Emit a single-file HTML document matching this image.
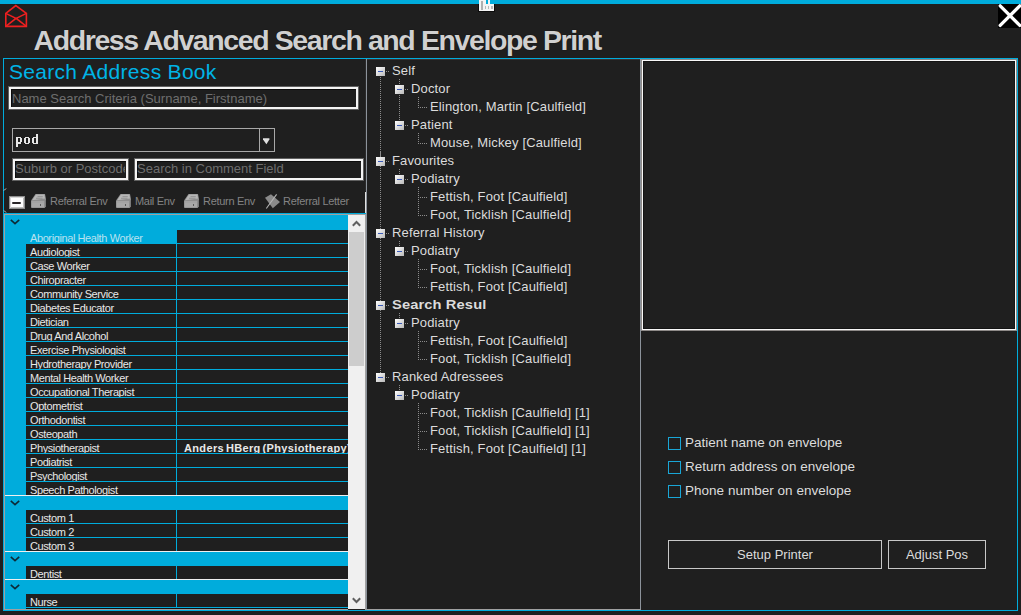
<!DOCTYPE html>
<html><head><meta charset="utf-8"><style>
html,body{margin:0;padding:0;width:1021px;height:615px;overflow:hidden;background:#1f1f1f;font-family:'Liberation Sans', sans-serif;}
</style></head><body>
<div style="position:absolute;left:0;top:0;width:1021px;height:4px;background:#00acdc"></div><svg style="position:absolute;left:478px;top:0" width="17" height="12" viewBox="0 0 17 12"><rect x="0" y="4" width="17" height="8" fill="#000" opacity="0.6"/><rect x="1" y="0" width="7" height="11" fill="#f4f4f4"/><rect x="1" y="4" width="15" height="7" fill="#f4f4f4"/><rect x="10" y="0" width="2" height="4" fill="#f4f4f4"/><rect x="3" y="1" width="2" height="9" fill="#b0b0b0"/><rect x="7" y="6" width="1" height="3" fill="#b8b8b8"/><rect x="10" y="6" width="1" height="3" fill="#b8b8b8"/><rect x="13" y="6" width="2" height="3" fill="#b8b8b8"/></svg><svg style="position:absolute;left:0;top:0" width="40" height="40" viewBox="0 0 40 40"><path d="M5.8 13.3 L15.8 5.6 L26.4 13.3 L26.4 26.4 L5.8 26.4 Z" fill="none" stroke="#ee2020" stroke-width="1.6" stroke-linejoin="miter"/><path d="M5.8 13.3 L16.1 18.3 L26.4 13.3 M5.8 26.4 L16.1 18.3 L26.4 26.4" fill="none" stroke="#ee2020" stroke-width="1.5"/></svg><div style="position:absolute;left:33.5px;top:23.5px;font:bold 28.5px 'Liberation Sans', sans-serif;color:#d0d0d0;white-space:nowrap;letter-spacing:-1.4px;text-shadow:0 0 1px rgba(0,0,0,0.9)">Address Advanced Search and Envelope Print</div><svg style="position:absolute;left:998px;top:4px" width="23" height="24" viewBox="0 0 23 24"><rect width="23" height="24" fill="#000"/><path d="M2.2 1.8 L21.8 21.4 M21.8 1.8 L2.2 21.4" stroke="#fff" stroke-width="3.3" stroke-linecap="round"/></svg><div style="position:absolute;left:3px;top:58px;width:1015px;height:553px;box-sizing:border-box;border:1px solid #00acdc"></div><svg style="position:absolute;left:3px;top:187px" width="4" height="28" viewBox="0 0 4 28"><path d="M1 3.5 L3 1.5 M1 23.5 L3 25.5" stroke="#e8e8e8" stroke-width="0.9"/></svg><div style="position:absolute;left:367px;top:59px;width:273px;height:1px;background:#3a3230"></div><div style="position:absolute;left:9px;top:60px;font:21px 'Liberation Sans', sans-serif;color:#00b4e6;white-space:nowrap;letter-spacing:0.3px">Search Address Book</div><div style="position:absolute;left:9px;top:87px;width:349px;height:22px;box-sizing:border-box;border:2px solid #f4f4f4;box-shadow:0 0 0 1px rgba(150,150,150,0.55);background:#1e1e1e;"><div style="position:absolute;left:0;top:0;right:0;bottom:0;border-top:1px solid #0c0c0c;border-left:1px solid #0c0c0c"></div><div style="position:absolute;left:1px;top:2px;font:13px 'Liberation Sans', sans-serif;color:#6e6e6e;white-space:nowrap;overflow:hidden;width:344px">Name Search Criteria (Surname, Firstname)</div></div><div style="position:absolute;left:12px;top:128px;width:263px;height:24px;box-sizing:border-box;border:1px solid #a8a8a8;background:#1f1f1f"><div style="position:absolute;left:246px;top:0;width:1px;height:22px;background:#a8a8a8"></div><svg style="position:absolute;left:-13px;top:-129px" width="40" height="150" shape-rendering="crispEdges"><g fill="#e6e6e6"><rect x="16" y="137" width="2" height="10"/><rect x="18" y="137" width="3" height="1"/><rect x="20" y="138" width="2" height="4"/><rect x="18" y="142" width="3" height="2"/><rect x="24" y="138" width="2" height="5"/><rect x="28" y="138" width="2" height="5"/><rect x="25" y="137" width="4" height="1"/><rect x="25" y="143" width="4" height="1"/><rect x="36" y="134" width="2" height="10"/><rect x="32" y="138" width="2" height="5"/><rect x="33" y="137" width="3" height="1"/><rect x="33" y="143" width="3" height="1"/></g></svg><svg style="position:absolute;left:250px;top:9px" width="8" height="8" viewBox="0 0 8 8"><path d="M0 0.2H6.4V1.6L3.4 6.2L0 1.6Z" fill="#e0e0e0"/></svg></div><div style="position:absolute;left:13px;top:159px;width:115px;height:21px;box-sizing:border-box;border:2px solid #f4f4f4;box-shadow:0 0 0 1px rgba(150,150,150,0.55);background:#1e1e1e;"><div style="position:absolute;left:0;top:0;right:0;bottom:0;border-top:1px solid #0c0c0c;border-left:1px solid #0c0c0c"></div><div style="position:absolute;left:0px;top:0px;font:13px 'Liberation Sans', sans-serif;color:#6e6e6e;white-space:nowrap;overflow:hidden;width:110px">Suburb or Postcode</div></div><div style="position:absolute;left:135px;top:159px;width:228px;height:21px;box-sizing:border-box;border:2px solid #f4f4f4;box-shadow:0 0 0 1px rgba(150,150,150,0.55);background:#1e1e1e;"><div style="position:absolute;left:0;top:0;right:0;bottom:0;border-top:1px solid #0c0c0c;border-left:1px solid #0c0c0c"></div><div style="position:absolute;left:0px;top:0px;font:13px 'Liberation Sans', sans-serif;color:#6e6e6e;white-space:nowrap;overflow:hidden;width:223px">Search in Comment Field</div></div><div style="position:absolute;left:4px;top:213px;width:362px;height:1px;background:#00acdc"></div><div style="position:absolute;left:365px;top:192px;width:1px;height:21px;background:#e0e0e0"></div><div style="position:absolute;left:365px;top:59px;width:1px;height:132px;background:#2a2a2a"></div><div style="position:absolute;left:9px;top:196px;width:16px;height:13px;box-sizing:border-box;background:#fdfdfd;border:1px solid #8e8e8e;box-shadow:inset 1px 1px 0 #d8d8d8, inset -1px -1px 0 #bdbdbd"><div style="position:absolute;left:2px;top:5px;width:9px;height:2px;background:#2a2628;border-radius:1px"></div></div><svg style="position:absolute;left:30px;top:193px" width="17" height="16" viewBox="0 0 17 16"><path d="M5.5 1 H15 L16 6 L16 13.5 L14.5 15 H1.5 L1 14 V7.5 Z" fill="#8e8e8e"/><path d="M6 1.6 H14.4 L15 5.6 L2.2 7.2 Z" fill="#b6b6b6"/><path d="M1.6 8 H14.6 V14.4 H1.6 Z" fill="#a9a9a9"/><path d="M14.6 8 L15.8 6.5 V13.2 L14.6 14.4 Z" fill="#777"/><path d="M7.5 3.6 H12.8 M6 5.3 H12.5" stroke="#8c8c8c" stroke-width="0.8"/><path d="M1.6 9 H14.6" stroke="#9a9a9a" stroke-width="0.6"/><rect x="10" y="11" width="1" height="2" fill="#5a5a5a"/></svg><div style="position:absolute;left:50px;top:195px;font:11px 'Liberation Sans', sans-serif;color:#848484;white-space:nowrap;letter-spacing:-0.3px">Referral Env</div><svg style="position:absolute;left:115px;top:193px" width="17" height="16" viewBox="0 0 17 16"><path d="M5.5 1 H15 L16 6 L16 13.5 L14.5 15 H1.5 L1 14 V7.5 Z" fill="#8e8e8e"/><path d="M6 1.6 H14.4 L15 5.6 L2.2 7.2 Z" fill="#b6b6b6"/><path d="M1.6 8 H14.6 V14.4 H1.6 Z" fill="#a9a9a9"/><path d="M14.6 8 L15.8 6.5 V13.2 L14.6 14.4 Z" fill="#777"/><path d="M7.5 3.6 H12.8 M6 5.3 H12.5" stroke="#8c8c8c" stroke-width="0.8"/><path d="M1.6 9 H14.6" stroke="#9a9a9a" stroke-width="0.6"/><rect x="10" y="11" width="1" height="2" fill="#5a5a5a"/></svg><div style="position:absolute;left:135px;top:195px;font:11px 'Liberation Sans', sans-serif;color:#848484;white-space:nowrap;letter-spacing:-0.3px">Mail Env</div><svg style="position:absolute;left:183px;top:193px" width="17" height="16" viewBox="0 0 17 16"><path d="M5.5 1 H15 L16 6 L16 13.5 L14.5 15 H1.5 L1 14 V7.5 Z" fill="#8e8e8e"/><path d="M6 1.6 H14.4 L15 5.6 L2.2 7.2 Z" fill="#b6b6b6"/><path d="M1.6 8 H14.6 V14.4 H1.6 Z" fill="#a9a9a9"/><path d="M14.6 8 L15.8 6.5 V13.2 L14.6 14.4 Z" fill="#777"/><path d="M7.5 3.6 H12.8 M6 5.3 H12.5" stroke="#8c8c8c" stroke-width="0.8"/><path d="M1.6 9 H14.6" stroke="#9a9a9a" stroke-width="0.6"/><rect x="10" y="11" width="1" height="2" fill="#5a5a5a"/></svg><div style="position:absolute;left:203px;top:195px;font:11px 'Liberation Sans', sans-serif;color:#848484;white-space:nowrap;letter-spacing:-0.3px">Return Env</div><svg style="position:absolute;left:261px;top:190px" width="22" height="22" viewBox="0 0 22 22"><path d="M4 7.8 L10 4.2 L19 12 L11.8 18.2 Z" fill="#8a8a8a"/><path d="M5.3 18.5 L15.6 4.4" stroke="#b4b4b4" stroke-width="1.1"/></svg><div style="position:absolute;left:283px;top:195px;font:11px 'Liberation Sans', sans-serif;color:#848484;white-space:nowrap;letter-spacing:-0.3px">Referral Letter</div><div style="position:absolute;left:4px;top:214px;width:344px;height:396px;box-sizing:border-box;border-left:1px solid #a0a0a0;border-top:1px solid #a0a0a0;border-bottom:1px solid #a0a0a0;background:#00acdc;overflow:hidden"><svg style="position:absolute;left:5px;top:4px" width="10" height="6" viewBox="0 0 10 6"><path d="M0.8 0.8 L5 4.6 L9.2 0.8" fill="none" stroke="#0d2a36" stroke-width="1.6"/></svg><div style="position:absolute;left:21px;top:15px;width:150px;height:13px;font:11px 'Liberation Sans', sans-serif;color:#b8e2f0;padding-left:4px;box-sizing:border-box;line-height:16px;white-space:nowrap;overflow:hidden;letter-spacing:-0.4px">Aboriginal Health Worker</div><div style="position:absolute;left:172px;top:15px;width:200px;height:13px;background:#1f1f1f;font:bold 11px 'Liberation Sans', sans-serif;color:#e8e8e8;padding-left:7px;box-sizing:border-box;line-height:16px;white-space:nowrap;overflow:hidden"><span style="display:inline-block;letter-spacing:0.35px;word-spacing:-1.5px"></span></div><div style="position:absolute;left:21px;top:29px;width:150px;height:13px;background:#1f1f1f;font:11px 'Liberation Sans', sans-serif;color:#e8e8e8;padding-left:4px;box-sizing:border-box;line-height:16px;white-space:nowrap;overflow:hidden;letter-spacing:-0.4px">Audiologist</div><div style="position:absolute;left:172px;top:29px;width:200px;height:13px;background:#1f1f1f;font:bold 11px 'Liberation Sans', sans-serif;color:#e8e8e8;padding-left:7px;box-sizing:border-box;line-height:16px;white-space:nowrap;overflow:hidden"><span style="display:inline-block;letter-spacing:0.35px;word-spacing:-1.5px"></span></div><div style="position:absolute;left:21px;top:43px;width:150px;height:13px;background:#1f1f1f;font:11px 'Liberation Sans', sans-serif;color:#e8e8e8;padding-left:4px;box-sizing:border-box;line-height:16px;white-space:nowrap;overflow:hidden;letter-spacing:-0.4px">Case Worker</div><div style="position:absolute;left:172px;top:43px;width:200px;height:13px;background:#1f1f1f;font:bold 11px 'Liberation Sans', sans-serif;color:#e8e8e8;padding-left:7px;box-sizing:border-box;line-height:16px;white-space:nowrap;overflow:hidden"><span style="display:inline-block;letter-spacing:0.35px;word-spacing:-1.5px"></span></div><div style="position:absolute;left:21px;top:57px;width:150px;height:13px;background:#1f1f1f;font:11px 'Liberation Sans', sans-serif;color:#e8e8e8;padding-left:4px;box-sizing:border-box;line-height:16px;white-space:nowrap;overflow:hidden;letter-spacing:-0.4px">Chiropracter</div><div style="position:absolute;left:172px;top:57px;width:200px;height:13px;background:#1f1f1f;font:bold 11px 'Liberation Sans', sans-serif;color:#e8e8e8;padding-left:7px;box-sizing:border-box;line-height:16px;white-space:nowrap;overflow:hidden"><span style="display:inline-block;letter-spacing:0.35px;word-spacing:-1.5px"></span></div><div style="position:absolute;left:21px;top:71px;width:150px;height:13px;background:#1f1f1f;font:11px 'Liberation Sans', sans-serif;color:#e8e8e8;padding-left:4px;box-sizing:border-box;line-height:16px;white-space:nowrap;overflow:hidden;letter-spacing:-0.4px">Community Service</div><div style="position:absolute;left:172px;top:71px;width:200px;height:13px;background:#1f1f1f;font:bold 11px 'Liberation Sans', sans-serif;color:#e8e8e8;padding-left:7px;box-sizing:border-box;line-height:16px;white-space:nowrap;overflow:hidden"><span style="display:inline-block;letter-spacing:0.35px;word-spacing:-1.5px"></span></div><div style="position:absolute;left:21px;top:85px;width:150px;height:13px;background:#1f1f1f;font:11px 'Liberation Sans', sans-serif;color:#e8e8e8;padding-left:4px;box-sizing:border-box;line-height:16px;white-space:nowrap;overflow:hidden;letter-spacing:-0.4px">Diabetes Educator</div><div style="position:absolute;left:172px;top:85px;width:200px;height:13px;background:#1f1f1f;font:bold 11px 'Liberation Sans', sans-serif;color:#e8e8e8;padding-left:7px;box-sizing:border-box;line-height:16px;white-space:nowrap;overflow:hidden"><span style="display:inline-block;letter-spacing:0.35px;word-spacing:-1.5px"></span></div><div style="position:absolute;left:21px;top:99px;width:150px;height:13px;background:#1f1f1f;font:11px 'Liberation Sans', sans-serif;color:#e8e8e8;padding-left:4px;box-sizing:border-box;line-height:16px;white-space:nowrap;overflow:hidden;letter-spacing:-0.4px">Dietician</div><div style="position:absolute;left:172px;top:99px;width:200px;height:13px;background:#1f1f1f;font:bold 11px 'Liberation Sans', sans-serif;color:#e8e8e8;padding-left:7px;box-sizing:border-box;line-height:16px;white-space:nowrap;overflow:hidden"><span style="display:inline-block;letter-spacing:0.35px;word-spacing:-1.5px"></span></div><div style="position:absolute;left:21px;top:113px;width:150px;height:13px;background:#1f1f1f;font:11px 'Liberation Sans', sans-serif;color:#e8e8e8;padding-left:4px;box-sizing:border-box;line-height:16px;white-space:nowrap;overflow:hidden;letter-spacing:-0.4px">Drug And Alcohol</div><div style="position:absolute;left:172px;top:113px;width:200px;height:13px;background:#1f1f1f;font:bold 11px 'Liberation Sans', sans-serif;color:#e8e8e8;padding-left:7px;box-sizing:border-box;line-height:16px;white-space:nowrap;overflow:hidden"><span style="display:inline-block;letter-spacing:0.35px;word-spacing:-1.5px"></span></div><div style="position:absolute;left:21px;top:127px;width:150px;height:13px;background:#1f1f1f;font:11px 'Liberation Sans', sans-serif;color:#e8e8e8;padding-left:4px;box-sizing:border-box;line-height:16px;white-space:nowrap;overflow:hidden;letter-spacing:-0.4px">Exercise Physiologist</div><div style="position:absolute;left:172px;top:127px;width:200px;height:13px;background:#1f1f1f;font:bold 11px 'Liberation Sans', sans-serif;color:#e8e8e8;padding-left:7px;box-sizing:border-box;line-height:16px;white-space:nowrap;overflow:hidden"><span style="display:inline-block;letter-spacing:0.35px;word-spacing:-1.5px"></span></div><div style="position:absolute;left:21px;top:141px;width:150px;height:13px;background:#1f1f1f;font:11px 'Liberation Sans', sans-serif;color:#e8e8e8;padding-left:4px;box-sizing:border-box;line-height:16px;white-space:nowrap;overflow:hidden;letter-spacing:-0.4px">Hydrotherapy Provider</div><div style="position:absolute;left:172px;top:141px;width:200px;height:13px;background:#1f1f1f;font:bold 11px 'Liberation Sans', sans-serif;color:#e8e8e8;padding-left:7px;box-sizing:border-box;line-height:16px;white-space:nowrap;overflow:hidden"><span style="display:inline-block;letter-spacing:0.35px;word-spacing:-1.5px"></span></div><div style="position:absolute;left:21px;top:155px;width:150px;height:13px;background:#1f1f1f;font:11px 'Liberation Sans', sans-serif;color:#e8e8e8;padding-left:4px;box-sizing:border-box;line-height:16px;white-space:nowrap;overflow:hidden;letter-spacing:-0.4px">Mental Health Worker</div><div style="position:absolute;left:172px;top:155px;width:200px;height:13px;background:#1f1f1f;font:bold 11px 'Liberation Sans', sans-serif;color:#e8e8e8;padding-left:7px;box-sizing:border-box;line-height:16px;white-space:nowrap;overflow:hidden"><span style="display:inline-block;letter-spacing:0.35px;word-spacing:-1.5px"></span></div><div style="position:absolute;left:21px;top:169px;width:150px;height:13px;background:#1f1f1f;font:11px 'Liberation Sans', sans-serif;color:#e8e8e8;padding-left:4px;box-sizing:border-box;line-height:16px;white-space:nowrap;overflow:hidden;letter-spacing:-0.4px">Occupational Therapist</div><div style="position:absolute;left:172px;top:169px;width:200px;height:13px;background:#1f1f1f;font:bold 11px 'Liberation Sans', sans-serif;color:#e8e8e8;padding-left:7px;box-sizing:border-box;line-height:16px;white-space:nowrap;overflow:hidden"><span style="display:inline-block;letter-spacing:0.35px;word-spacing:-1.5px"></span></div><div style="position:absolute;left:21px;top:183px;width:150px;height:13px;background:#1f1f1f;font:11px 'Liberation Sans', sans-serif;color:#e8e8e8;padding-left:4px;box-sizing:border-box;line-height:16px;white-space:nowrap;overflow:hidden;letter-spacing:-0.4px">Optometrist</div><div style="position:absolute;left:172px;top:183px;width:200px;height:13px;background:#1f1f1f;font:bold 11px 'Liberation Sans', sans-serif;color:#e8e8e8;padding-left:7px;box-sizing:border-box;line-height:16px;white-space:nowrap;overflow:hidden"><span style="display:inline-block;letter-spacing:0.35px;word-spacing:-1.5px"></span></div><div style="position:absolute;left:21px;top:197px;width:150px;height:13px;background:#1f1f1f;font:11px 'Liberation Sans', sans-serif;color:#e8e8e8;padding-left:4px;box-sizing:border-box;line-height:16px;white-space:nowrap;overflow:hidden;letter-spacing:-0.4px">Orthodontist</div><div style="position:absolute;left:172px;top:197px;width:200px;height:13px;background:#1f1f1f;font:bold 11px 'Liberation Sans', sans-serif;color:#e8e8e8;padding-left:7px;box-sizing:border-box;line-height:16px;white-space:nowrap;overflow:hidden"><span style="display:inline-block;letter-spacing:0.35px;word-spacing:-1.5px"></span></div><div style="position:absolute;left:21px;top:211px;width:150px;height:13px;background:#1f1f1f;font:11px 'Liberation Sans', sans-serif;color:#e8e8e8;padding-left:4px;box-sizing:border-box;line-height:16px;white-space:nowrap;overflow:hidden;letter-spacing:-0.4px">Osteopath</div><div style="position:absolute;left:172px;top:211px;width:200px;height:13px;background:#1f1f1f;font:bold 11px 'Liberation Sans', sans-serif;color:#e8e8e8;padding-left:7px;box-sizing:border-box;line-height:16px;white-space:nowrap;overflow:hidden"><span style="display:inline-block;letter-spacing:0.35px;word-spacing:-1.5px"></span></div><div style="position:absolute;left:21px;top:225px;width:150px;height:13px;background:#1f1f1f;font:11px 'Liberation Sans', sans-serif;color:#e8e8e8;padding-left:4px;box-sizing:border-box;line-height:16px;white-space:nowrap;overflow:hidden;letter-spacing:-0.4px">Physiotherapist</div><div style="position:absolute;left:172px;top:225px;width:200px;height:13px;background:#1f1f1f;font:bold 11px 'Liberation Sans', sans-serif;color:#e8e8e8;padding-left:7px;box-sizing:border-box;line-height:16px;white-space:nowrap;overflow:hidden"><span style="display:inline-block;letter-spacing:0.35px;word-spacing:-1.5px">Anders HBerg (Physiotherapy)</span></div><div style="position:absolute;left:21px;top:239px;width:150px;height:13px;background:#1f1f1f;font:11px 'Liberation Sans', sans-serif;color:#e8e8e8;padding-left:4px;box-sizing:border-box;line-height:16px;white-space:nowrap;overflow:hidden;letter-spacing:-0.4px">Podiatrist</div><div style="position:absolute;left:172px;top:239px;width:200px;height:13px;background:#1f1f1f;font:bold 11px 'Liberation Sans', sans-serif;color:#e8e8e8;padding-left:7px;box-sizing:border-box;line-height:16px;white-space:nowrap;overflow:hidden"><span style="display:inline-block;letter-spacing:0.35px;word-spacing:-1.5px"></span></div><div style="position:absolute;left:21px;top:253px;width:150px;height:13px;background:#1f1f1f;font:11px 'Liberation Sans', sans-serif;color:#e8e8e8;padding-left:4px;box-sizing:border-box;line-height:16px;white-space:nowrap;overflow:hidden;letter-spacing:-0.4px">Psychologist</div><div style="position:absolute;left:172px;top:253px;width:200px;height:13px;background:#1f1f1f;font:bold 11px 'Liberation Sans', sans-serif;color:#e8e8e8;padding-left:7px;box-sizing:border-box;line-height:16px;white-space:nowrap;overflow:hidden"><span style="display:inline-block;letter-spacing:0.35px;word-spacing:-1.5px"></span></div><div style="position:absolute;left:21px;top:267px;width:150px;height:13px;background:#1f1f1f;font:11px 'Liberation Sans', sans-serif;color:#e8e8e8;padding-left:4px;box-sizing:border-box;line-height:16px;white-space:nowrap;overflow:hidden;letter-spacing:-0.4px">Speech Pathologist</div><div style="position:absolute;left:172px;top:267px;width:200px;height:13px;background:#1f1f1f;font:bold 11px 'Liberation Sans', sans-serif;color:#e8e8e8;padding-left:7px;box-sizing:border-box;line-height:16px;white-space:nowrap;overflow:hidden"><span style="display:inline-block;letter-spacing:0.35px;word-spacing:-1.5px"></span></div><div style="position:absolute;left:0;top:280px;width:400px;height:1px;background:#f0f0f0"></div><svg style="position:absolute;left:5px;top:285px" width="10" height="6" viewBox="0 0 10 6"><path d="M0.8 0.8 L5 4.6 L9.2 0.8" fill="none" stroke="#0d2a36" stroke-width="1.6"/></svg><div style="position:absolute;left:21px;top:295px;width:150px;height:13px;background:#1f1f1f;font:11px 'Liberation Sans', sans-serif;color:#e8e8e8;padding-left:4px;box-sizing:border-box;line-height:16px;white-space:nowrap;overflow:hidden;letter-spacing:-0.4px">Custom 1</div><div style="position:absolute;left:172px;top:295px;width:200px;height:13px;background:#1f1f1f;font:bold 11px 'Liberation Sans', sans-serif;color:#e8e8e8;padding-left:7px;box-sizing:border-box;line-height:16px;white-space:nowrap;overflow:hidden"><span style="display:inline-block;letter-spacing:0.35px;word-spacing:-1.5px"></span></div><div style="position:absolute;left:21px;top:309px;width:150px;height:13px;background:#1f1f1f;font:11px 'Liberation Sans', sans-serif;color:#e8e8e8;padding-left:4px;box-sizing:border-box;line-height:16px;white-space:nowrap;overflow:hidden;letter-spacing:-0.4px">Custom 2</div><div style="position:absolute;left:172px;top:309px;width:200px;height:13px;background:#1f1f1f;font:bold 11px 'Liberation Sans', sans-serif;color:#e8e8e8;padding-left:7px;box-sizing:border-box;line-height:16px;white-space:nowrap;overflow:hidden"><span style="display:inline-block;letter-spacing:0.35px;word-spacing:-1.5px"></span></div><div style="position:absolute;left:21px;top:323px;width:150px;height:13px;background:#1f1f1f;font:11px 'Liberation Sans', sans-serif;color:#e8e8e8;padding-left:4px;box-sizing:border-box;line-height:16px;white-space:nowrap;overflow:hidden;letter-spacing:-0.4px">Custom 3</div><div style="position:absolute;left:172px;top:323px;width:200px;height:13px;background:#1f1f1f;font:bold 11px 'Liberation Sans', sans-serif;color:#e8e8e8;padding-left:7px;box-sizing:border-box;line-height:16px;white-space:nowrap;overflow:hidden"><span style="display:inline-block;letter-spacing:0.35px;word-spacing:-1.5px"></span></div><div style="position:absolute;left:0;top:336px;width:400px;height:1px;background:#f0f0f0"></div><svg style="position:absolute;left:5px;top:341px" width="10" height="6" viewBox="0 0 10 6"><path d="M0.8 0.8 L5 4.6 L9.2 0.8" fill="none" stroke="#0d2a36" stroke-width="1.6"/></svg><div style="position:absolute;left:21px;top:351px;width:150px;height:13px;background:#1f1f1f;font:11px 'Liberation Sans', sans-serif;color:#e8e8e8;padding-left:4px;box-sizing:border-box;line-height:16px;white-space:nowrap;overflow:hidden;letter-spacing:-0.4px">Dentist</div><div style="position:absolute;left:172px;top:351px;width:200px;height:13px;background:#1f1f1f;font:bold 11px 'Liberation Sans', sans-serif;color:#e8e8e8;padding-left:7px;box-sizing:border-box;line-height:16px;white-space:nowrap;overflow:hidden"><span style="display:inline-block;letter-spacing:0.35px;word-spacing:-1.5px"></span></div><div style="position:absolute;left:0;top:364px;width:400px;height:1px;background:#f0f0f0"></div><svg style="position:absolute;left:5px;top:369px" width="10" height="6" viewBox="0 0 10 6"><path d="M0.8 0.8 L5 4.6 L9.2 0.8" fill="none" stroke="#0d2a36" stroke-width="1.6"/></svg><div style="position:absolute;left:21px;top:379px;width:150px;height:13px;background:#1f1f1f;font:11px 'Liberation Sans', sans-serif;color:#e8e8e8;padding-left:4px;box-sizing:border-box;line-height:16px;white-space:nowrap;overflow:hidden;letter-spacing:-0.4px">Nurse</div><div style="position:absolute;left:172px;top:379px;width:200px;height:13px;background:#1f1f1f;font:bold 11px 'Liberation Sans', sans-serif;color:#e8e8e8;padding-left:7px;box-sizing:border-box;line-height:16px;white-space:nowrap;overflow:hidden"><span style="display:inline-block;letter-spacing:0.35px;word-spacing:-1.5px"></span></div><div style="position:absolute;left:21px;top:393px;width:400px;height:1px;background:#101010"></div></div><div style="position:absolute;left:348px;top:215px;width:17px;height:394px;background:#f0f0f0"><svg style="position:absolute;left:4px;top:5px" width="9" height="7" viewBox="0 0 9 7"><path d="M0.8 5.8 L4.5 2 L8.2 5.8" fill="none" stroke="#606060" stroke-width="2"/></svg><div style="position:absolute;left:1px;top:17px;width:15px;height:134px;background:#cdcdcd"></div><svg style="position:absolute;left:4px;top:382px" width="9" height="7" viewBox="0 0 9 7"><path d="M0.8 1.2 L4.5 5 L8.2 1.2" fill="none" stroke="#606060" stroke-width="2"/></svg></div><div style="position:absolute;left:365px;top:215px;width:1px;height:395px;background:#a0a0a0"></div><div style="position:absolute;left:4px;top:214px;width:362px;height:1px;background:#a0a0a0"></div><div style="position:absolute;left:366px;top:59px;width:275px;height:551px;box-sizing:border-box;border-left:1px solid #8c939b;border-right:1px solid #8c939b;border-bottom:1px solid #a0a0a0;"></div><div style="position:absolute;left:392px;top:62px;font:13px 'Liberation Sans', sans-serif;color:#dcdcdc;white-space:nowrap;line-height:18px;letter-spacing:0.15px;">Self</div><div style="position:absolute;left:411px;top:80px;font:13px 'Liberation Sans', sans-serif;color:#dcdcdc;white-space:nowrap;line-height:18px;letter-spacing:0.15px;">Doctor</div><div style="position:absolute;left:430px;top:98px;font:13px 'Liberation Sans', sans-serif;color:#dcdcdc;white-space:nowrap;line-height:18px;letter-spacing:0.15px;">Elington, Martin [Caulfield]</div><div style="position:absolute;left:411px;top:116px;font:13px 'Liberation Sans', sans-serif;color:#dcdcdc;white-space:nowrap;line-height:18px;letter-spacing:0.15px;">Patient</div><div style="position:absolute;left:430px;top:134px;font:13px 'Liberation Sans', sans-serif;color:#dcdcdc;white-space:nowrap;line-height:18px;letter-spacing:0.15px;">Mouse, Mickey [Caulfield]</div><div style="position:absolute;left:392px;top:152px;font:13px 'Liberation Sans', sans-serif;color:#dcdcdc;white-space:nowrap;line-height:18px;letter-spacing:0.15px;">Favourites</div><div style="position:absolute;left:411px;top:170px;font:13px 'Liberation Sans', sans-serif;color:#dcdcdc;white-space:nowrap;line-height:18px;letter-spacing:0.15px;">Podiatry</div><div style="position:absolute;left:430px;top:188px;font:13px 'Liberation Sans', sans-serif;color:#dcdcdc;white-space:nowrap;line-height:18px;letter-spacing:0.15px;">Fettish, Foot [Caulfield]</div><div style="position:absolute;left:430px;top:206px;font:13px 'Liberation Sans', sans-serif;color:#dcdcdc;white-space:nowrap;line-height:18px;letter-spacing:0.15px;">Foot, Ticklish [Caulfield]</div><div style="position:absolute;left:392px;top:224px;font:13px 'Liberation Sans', sans-serif;color:#dcdcdc;white-space:nowrap;line-height:18px;letter-spacing:0.15px;">Referral History</div><div style="position:absolute;left:411px;top:242px;font:13px 'Liberation Sans', sans-serif;color:#dcdcdc;white-space:nowrap;line-height:18px;letter-spacing:0.15px;">Podiatry</div><div style="position:absolute;left:430px;top:260px;font:13px 'Liberation Sans', sans-serif;color:#dcdcdc;white-space:nowrap;line-height:18px;letter-spacing:0.15px;">Foot, Ticklish [Caulfield]</div><div style="position:absolute;left:430px;top:278px;font:13px 'Liberation Sans', sans-serif;color:#dcdcdc;white-space:nowrap;line-height:18px;letter-spacing:0.15px;">Fettish, Foot [Caulfield]</div><div style="position:absolute;left:392px;top:296px;font:bold 13px 'Liberation Sans', sans-serif;color:#dcdcdc;white-space:nowrap;line-height:18px;letter-spacing:0.15px;letter-spacing:0.1px;transform:scaleX(1.13);transform-origin:0 0;">Search Resul</div><div style="position:absolute;left:411px;top:314px;font:13px 'Liberation Sans', sans-serif;color:#dcdcdc;white-space:nowrap;line-height:18px;letter-spacing:0.15px;">Podiatry</div><div style="position:absolute;left:430px;top:332px;font:13px 'Liberation Sans', sans-serif;color:#dcdcdc;white-space:nowrap;line-height:18px;letter-spacing:0.15px;">Fettish, Foot [Caulfield]</div><div style="position:absolute;left:430px;top:350px;font:13px 'Liberation Sans', sans-serif;color:#dcdcdc;white-space:nowrap;line-height:18px;letter-spacing:0.15px;">Foot, Ticklish [Caulfield]</div><div style="position:absolute;left:392px;top:368px;font:13px 'Liberation Sans', sans-serif;color:#dcdcdc;white-space:nowrap;line-height:18px;letter-spacing:0.15px;">Ranked Adressees</div><div style="position:absolute;left:411px;top:386px;font:13px 'Liberation Sans', sans-serif;color:#dcdcdc;white-space:nowrap;line-height:18px;letter-spacing:0.15px;">Podiatry</div><div style="position:absolute;left:430px;top:404px;font:13px 'Liberation Sans', sans-serif;color:#dcdcdc;white-space:nowrap;line-height:18px;letter-spacing:0.15px;">Foot, Ticklish [Caulfield] [1]</div><div style="position:absolute;left:430px;top:422px;font:13px 'Liberation Sans', sans-serif;color:#dcdcdc;white-space:nowrap;line-height:18px;letter-spacing:0.15px;">Foot, Ticklish [Caulfield] [1]</div><div style="position:absolute;left:430px;top:440px;font:13px 'Liberation Sans', sans-serif;color:#dcdcdc;white-space:nowrap;line-height:18px;letter-spacing:0.15px;">Fettish, Foot [Caulfield] [1]</div><svg style="position:absolute;left:0;top:0" width="1021" height="615"><path d="M380 71h1v1h-1zM380 73h1v1h-1zM380 75h1v1h-1zM380 77h1v1h-1zM380 79h1v1h-1zM380 81h1v1h-1zM380 83h1v1h-1zM380 85h1v1h-1zM380 87h1v1h-1zM380 89h1v1h-1zM380 91h1v1h-1zM380 93h1v1h-1zM380 95h1v1h-1zM380 97h1v1h-1zM380 99h1v1h-1zM380 101h1v1h-1zM380 103h1v1h-1zM380 105h1v1h-1zM380 107h1v1h-1zM380 109h1v1h-1zM380 111h1v1h-1zM380 113h1v1h-1zM380 115h1v1h-1zM380 117h1v1h-1zM380 119h1v1h-1zM380 121h1v1h-1zM380 123h1v1h-1zM380 125h1v1h-1zM380 127h1v1h-1zM380 129h1v1h-1zM380 131h1v1h-1zM380 133h1v1h-1zM380 135h1v1h-1zM380 137h1v1h-1zM380 139h1v1h-1zM380 141h1v1h-1zM380 143h1v1h-1zM380 145h1v1h-1zM380 147h1v1h-1zM380 149h1v1h-1zM380 151h1v1h-1zM380 153h1v1h-1zM380 155h1v1h-1zM380 157h1v1h-1zM380 159h1v1h-1zM380 161h1v1h-1zM382 71h1v1h-1zM384 71h1v1h-1zM386 71h1v1h-1zM388 71h1v1h-1zM399 79h1v1h-1zM399 81h1v1h-1zM399 83h1v1h-1zM399 85h1v1h-1zM399 87h1v1h-1zM399 89h1v1h-1zM399 91h1v1h-1zM399 93h1v1h-1zM399 95h1v1h-1zM399 97h1v1h-1zM399 99h1v1h-1zM399 101h1v1h-1zM399 103h1v1h-1zM399 105h1v1h-1zM399 107h1v1h-1zM399 109h1v1h-1zM399 111h1v1h-1zM399 113h1v1h-1zM399 115h1v1h-1zM399 117h1v1h-1zM399 119h1v1h-1zM399 121h1v1h-1zM399 123h1v1h-1zM399 125h1v1h-1zM401 89h1v1h-1zM403 89h1v1h-1zM405 89h1v1h-1zM407 89h1v1h-1zM418 97h1v1h-1zM418 99h1v1h-1zM418 101h1v1h-1zM418 103h1v1h-1zM418 105h1v1h-1zM418 107h1v1h-1zM420 107h1v1h-1zM422 107h1v1h-1zM424 107h1v1h-1zM426 107h1v1h-1zM399 115h1v1h-1zM399 117h1v1h-1zM399 119h1v1h-1zM399 121h1v1h-1zM399 123h1v1h-1zM399 125h1v1h-1zM401 125h1v1h-1zM403 125h1v1h-1zM405 125h1v1h-1zM407 125h1v1h-1zM418 133h1v1h-1zM418 135h1v1h-1zM418 137h1v1h-1zM418 139h1v1h-1zM418 141h1v1h-1zM418 143h1v1h-1zM420 143h1v1h-1zM422 143h1v1h-1zM424 143h1v1h-1zM426 143h1v1h-1zM380 152h1v1h-1zM380 154h1v1h-1zM380 156h1v1h-1zM380 158h1v1h-1zM380 160h1v1h-1zM380 162h1v1h-1zM380 164h1v1h-1zM380 166h1v1h-1zM380 168h1v1h-1zM380 170h1v1h-1zM380 172h1v1h-1zM380 174h1v1h-1zM380 176h1v1h-1zM380 178h1v1h-1zM380 180h1v1h-1zM380 182h1v1h-1zM380 184h1v1h-1zM380 186h1v1h-1zM380 188h1v1h-1zM380 190h1v1h-1zM380 192h1v1h-1zM380 194h1v1h-1zM380 196h1v1h-1zM380 198h1v1h-1zM380 200h1v1h-1zM380 202h1v1h-1zM380 204h1v1h-1zM380 206h1v1h-1zM380 208h1v1h-1zM380 210h1v1h-1zM380 212h1v1h-1zM380 214h1v1h-1zM380 216h1v1h-1zM380 218h1v1h-1zM380 220h1v1h-1zM380 222h1v1h-1zM380 224h1v1h-1zM380 226h1v1h-1zM380 228h1v1h-1zM380 230h1v1h-1zM380 232h1v1h-1zM382 161h1v1h-1zM384 161h1v1h-1zM386 161h1v1h-1zM388 161h1v1h-1zM399 169h1v1h-1zM399 171h1v1h-1zM399 173h1v1h-1zM399 175h1v1h-1zM399 177h1v1h-1zM399 179h1v1h-1zM401 179h1v1h-1zM403 179h1v1h-1zM405 179h1v1h-1zM407 179h1v1h-1zM418 187h1v1h-1zM418 189h1v1h-1zM418 191h1v1h-1zM418 193h1v1h-1zM418 195h1v1h-1zM418 197h1v1h-1zM418 199h1v1h-1zM418 201h1v1h-1zM418 203h1v1h-1zM418 205h1v1h-1zM418 207h1v1h-1zM418 209h1v1h-1zM418 211h1v1h-1zM418 213h1v1h-1zM418 215h1v1h-1zM420 197h1v1h-1zM422 197h1v1h-1zM424 197h1v1h-1zM426 197h1v1h-1zM418 205h1v1h-1zM418 207h1v1h-1zM418 209h1v1h-1zM418 211h1v1h-1zM418 213h1v1h-1zM418 215h1v1h-1zM420 215h1v1h-1zM422 215h1v1h-1zM424 215h1v1h-1zM426 215h1v1h-1zM380 224h1v1h-1zM380 226h1v1h-1zM380 228h1v1h-1zM380 230h1v1h-1zM380 232h1v1h-1zM380 234h1v1h-1zM380 236h1v1h-1zM380 238h1v1h-1zM380 240h1v1h-1zM380 242h1v1h-1zM380 244h1v1h-1zM380 246h1v1h-1zM380 248h1v1h-1zM380 250h1v1h-1zM380 252h1v1h-1zM380 254h1v1h-1zM380 256h1v1h-1zM380 258h1v1h-1zM380 260h1v1h-1zM380 262h1v1h-1zM380 264h1v1h-1zM380 266h1v1h-1zM380 268h1v1h-1zM380 270h1v1h-1zM380 272h1v1h-1zM380 274h1v1h-1zM380 276h1v1h-1zM380 278h1v1h-1zM380 280h1v1h-1zM380 282h1v1h-1zM380 284h1v1h-1zM380 286h1v1h-1zM380 288h1v1h-1zM380 290h1v1h-1zM380 292h1v1h-1zM380 294h1v1h-1zM380 296h1v1h-1zM380 298h1v1h-1zM380 300h1v1h-1zM380 302h1v1h-1zM380 304h1v1h-1zM382 233h1v1h-1zM384 233h1v1h-1zM386 233h1v1h-1zM388 233h1v1h-1zM399 241h1v1h-1zM399 243h1v1h-1zM399 245h1v1h-1zM399 247h1v1h-1zM399 249h1v1h-1zM399 251h1v1h-1zM401 251h1v1h-1zM403 251h1v1h-1zM405 251h1v1h-1zM407 251h1v1h-1zM418 259h1v1h-1zM418 261h1v1h-1zM418 263h1v1h-1zM418 265h1v1h-1zM418 267h1v1h-1zM418 269h1v1h-1zM418 271h1v1h-1zM418 273h1v1h-1zM418 275h1v1h-1zM418 277h1v1h-1zM418 279h1v1h-1zM418 281h1v1h-1zM418 283h1v1h-1zM418 285h1v1h-1zM418 287h1v1h-1zM420 269h1v1h-1zM422 269h1v1h-1zM424 269h1v1h-1zM426 269h1v1h-1zM418 277h1v1h-1zM418 279h1v1h-1zM418 281h1v1h-1zM418 283h1v1h-1zM418 285h1v1h-1zM418 287h1v1h-1zM420 287h1v1h-1zM422 287h1v1h-1zM424 287h1v1h-1zM426 287h1v1h-1zM380 296h1v1h-1zM380 298h1v1h-1zM380 300h1v1h-1zM380 302h1v1h-1zM380 304h1v1h-1zM380 306h1v1h-1zM380 308h1v1h-1zM380 310h1v1h-1zM380 312h1v1h-1zM380 314h1v1h-1zM380 316h1v1h-1zM380 318h1v1h-1zM380 320h1v1h-1zM380 322h1v1h-1zM380 324h1v1h-1zM380 326h1v1h-1zM380 328h1v1h-1zM380 330h1v1h-1zM380 332h1v1h-1zM380 334h1v1h-1zM380 336h1v1h-1zM380 338h1v1h-1zM380 340h1v1h-1zM380 342h1v1h-1zM380 344h1v1h-1zM380 346h1v1h-1zM380 348h1v1h-1zM380 350h1v1h-1zM380 352h1v1h-1zM380 354h1v1h-1zM380 356h1v1h-1zM380 358h1v1h-1zM380 360h1v1h-1zM380 362h1v1h-1zM380 364h1v1h-1zM380 366h1v1h-1zM380 368h1v1h-1zM380 370h1v1h-1zM380 372h1v1h-1zM380 374h1v1h-1zM380 376h1v1h-1zM382 305h1v1h-1zM384 305h1v1h-1zM386 305h1v1h-1zM388 305h1v1h-1zM399 313h1v1h-1zM399 315h1v1h-1zM399 317h1v1h-1zM399 319h1v1h-1zM399 321h1v1h-1zM399 323h1v1h-1zM401 323h1v1h-1zM403 323h1v1h-1zM405 323h1v1h-1zM407 323h1v1h-1zM418 331h1v1h-1zM418 333h1v1h-1zM418 335h1v1h-1zM418 337h1v1h-1zM418 339h1v1h-1zM418 341h1v1h-1zM418 343h1v1h-1zM418 345h1v1h-1zM418 347h1v1h-1zM418 349h1v1h-1zM418 351h1v1h-1zM418 353h1v1h-1zM418 355h1v1h-1zM418 357h1v1h-1zM418 359h1v1h-1zM420 341h1v1h-1zM422 341h1v1h-1zM424 341h1v1h-1zM426 341h1v1h-1zM418 349h1v1h-1zM418 351h1v1h-1zM418 353h1v1h-1zM418 355h1v1h-1zM418 357h1v1h-1zM418 359h1v1h-1zM420 359h1v1h-1zM422 359h1v1h-1zM424 359h1v1h-1zM426 359h1v1h-1zM380 368h1v1h-1zM380 370h1v1h-1zM380 372h1v1h-1zM380 374h1v1h-1zM380 376h1v1h-1zM382 377h1v1h-1zM384 377h1v1h-1zM386 377h1v1h-1zM388 377h1v1h-1zM399 385h1v1h-1zM399 387h1v1h-1zM399 389h1v1h-1zM399 391h1v1h-1zM399 393h1v1h-1zM399 395h1v1h-1zM401 395h1v1h-1zM403 395h1v1h-1zM405 395h1v1h-1zM407 395h1v1h-1zM418 403h1v1h-1zM418 405h1v1h-1zM418 407h1v1h-1zM418 409h1v1h-1zM418 411h1v1h-1zM418 413h1v1h-1zM418 415h1v1h-1zM418 417h1v1h-1zM418 419h1v1h-1zM418 421h1v1h-1zM418 423h1v1h-1zM418 425h1v1h-1zM418 427h1v1h-1zM418 429h1v1h-1zM418 431h1v1h-1zM420 413h1v1h-1zM422 413h1v1h-1zM424 413h1v1h-1zM426 413h1v1h-1zM418 421h1v1h-1zM418 423h1v1h-1zM418 425h1v1h-1zM418 427h1v1h-1zM418 429h1v1h-1zM418 431h1v1h-1zM418 433h1v1h-1zM418 435h1v1h-1zM418 437h1v1h-1zM418 439h1v1h-1zM418 441h1v1h-1zM418 443h1v1h-1zM418 445h1v1h-1zM418 447h1v1h-1zM418 449h1v1h-1zM420 431h1v1h-1zM422 431h1v1h-1zM424 431h1v1h-1zM426 431h1v1h-1zM418 439h1v1h-1zM418 441h1v1h-1zM418 443h1v1h-1zM418 445h1v1h-1zM418 447h1v1h-1zM418 449h1v1h-1zM420 449h1v1h-1zM422 449h1v1h-1zM424 449h1v1h-1zM426 449h1v1h-1z" fill="#8c8c8c"/><rect x="376" y="67" width="9" height="9" fill="url(#bg)"/><rect x="376" y="67" width="9" height="9" fill="none" stroke="#a0a0a0" stroke-width="0" /><rect x="378" y="71" width="5" height="1" fill="#3a5ab8"/><rect x="395" y="85" width="9" height="9" fill="url(#bg)"/><rect x="395" y="85" width="9" height="9" fill="none" stroke="#a0a0a0" stroke-width="0" /><rect x="397" y="89" width="5" height="1" fill="#3a5ab8"/><rect x="395" y="121" width="9" height="9" fill="url(#bg)"/><rect x="395" y="121" width="9" height="9" fill="none" stroke="#a0a0a0" stroke-width="0" /><rect x="397" y="125" width="5" height="1" fill="#3a5ab8"/><rect x="376" y="157" width="9" height="9" fill="url(#bg)"/><rect x="376" y="157" width="9" height="9" fill="none" stroke="#a0a0a0" stroke-width="0" /><rect x="378" y="161" width="5" height="1" fill="#3a5ab8"/><rect x="395" y="175" width="9" height="9" fill="url(#bg)"/><rect x="395" y="175" width="9" height="9" fill="none" stroke="#a0a0a0" stroke-width="0" /><rect x="397" y="179" width="5" height="1" fill="#3a5ab8"/><rect x="376" y="229" width="9" height="9" fill="url(#bg)"/><rect x="376" y="229" width="9" height="9" fill="none" stroke="#a0a0a0" stroke-width="0" /><rect x="378" y="233" width="5" height="1" fill="#3a5ab8"/><rect x="395" y="247" width="9" height="9" fill="url(#bg)"/><rect x="395" y="247" width="9" height="9" fill="none" stroke="#a0a0a0" stroke-width="0" /><rect x="397" y="251" width="5" height="1" fill="#3a5ab8"/><rect x="376" y="301" width="9" height="9" fill="url(#bg)"/><rect x="376" y="301" width="9" height="9" fill="none" stroke="#a0a0a0" stroke-width="0" /><rect x="378" y="305" width="5" height="1" fill="#3a5ab8"/><rect x="395" y="319" width="9" height="9" fill="url(#bg)"/><rect x="395" y="319" width="9" height="9" fill="none" stroke="#a0a0a0" stroke-width="0" /><rect x="397" y="323" width="5" height="1" fill="#3a5ab8"/><rect x="376" y="373" width="9" height="9" fill="url(#bg)"/><rect x="376" y="373" width="9" height="9" fill="none" stroke="#a0a0a0" stroke-width="0" /><rect x="378" y="377" width="5" height="1" fill="#3a5ab8"/><rect x="395" y="391" width="9" height="9" fill="url(#bg)"/><rect x="395" y="391" width="9" height="9" fill="none" stroke="#a0a0a0" stroke-width="0" /><rect x="397" y="395" width="5" height="1" fill="#3a5ab8"/><defs><linearGradient id="bg" x1="0" y1="0" x2="1" y2="1"><stop offset="0" stop-color="#ffffff"/><stop offset="1" stop-color="#b8b8b8"/></linearGradient></defs></svg><div style="position:absolute;left:641px;top:59px;width:376px;height:272px;box-sizing:border-box;border:1px solid #8e8a88;"><div style="position:absolute;left:0;top:0;right:0;bottom:0;border:1px solid #f8f8f8;"><div style="position:absolute;left:0;top:0;right:0;bottom:0;border:1px solid #141414"></div></div></div><div style="position:absolute;left:668px;top:437px;width:13px;height:13px;box-sizing:border-box;border:1px solid #19a6d6"></div><div style="position:absolute;left:685px;top:434px;font:13.5px 'Liberation Sans', sans-serif;color:#dcdcdc;white-space:nowrap;line-height:17px;letter-spacing:0.02px">Patient name on envelope</div><div style="position:absolute;left:668px;top:461px;width:13px;height:13px;box-sizing:border-box;border:1px solid #19a6d6"></div><div style="position:absolute;left:685px;top:458px;font:13.5px 'Liberation Sans', sans-serif;color:#dcdcdc;white-space:nowrap;line-height:17px;letter-spacing:0.02px">Return address on envelope</div><div style="position:absolute;left:668px;top:485px;width:13px;height:13px;box-sizing:border-box;border:1px solid #19a6d6"></div><div style="position:absolute;left:685px;top:482px;font:13.5px 'Liberation Sans', sans-serif;color:#dcdcdc;white-space:nowrap;line-height:17px;letter-spacing:0.02px">Phone number on envelope</div><div style="position:absolute;left:668px;top:540px;width:214px;height:29px;box-sizing:border-box;border:1px solid #c8c8c8;font:13px 'Liberation Sans', sans-serif;color:#dcdcdc;text-align:center;line-height:27px">Setup Printer</div><div style="position:absolute;left:888px;top:540px;width:98px;height:29px;box-sizing:border-box;border:1px solid #c8c8c8;font:13px 'Liberation Sans', sans-serif;color:#dcdcdc;text-align:center;line-height:27px">Adjust Pos</div>
</body></html>
